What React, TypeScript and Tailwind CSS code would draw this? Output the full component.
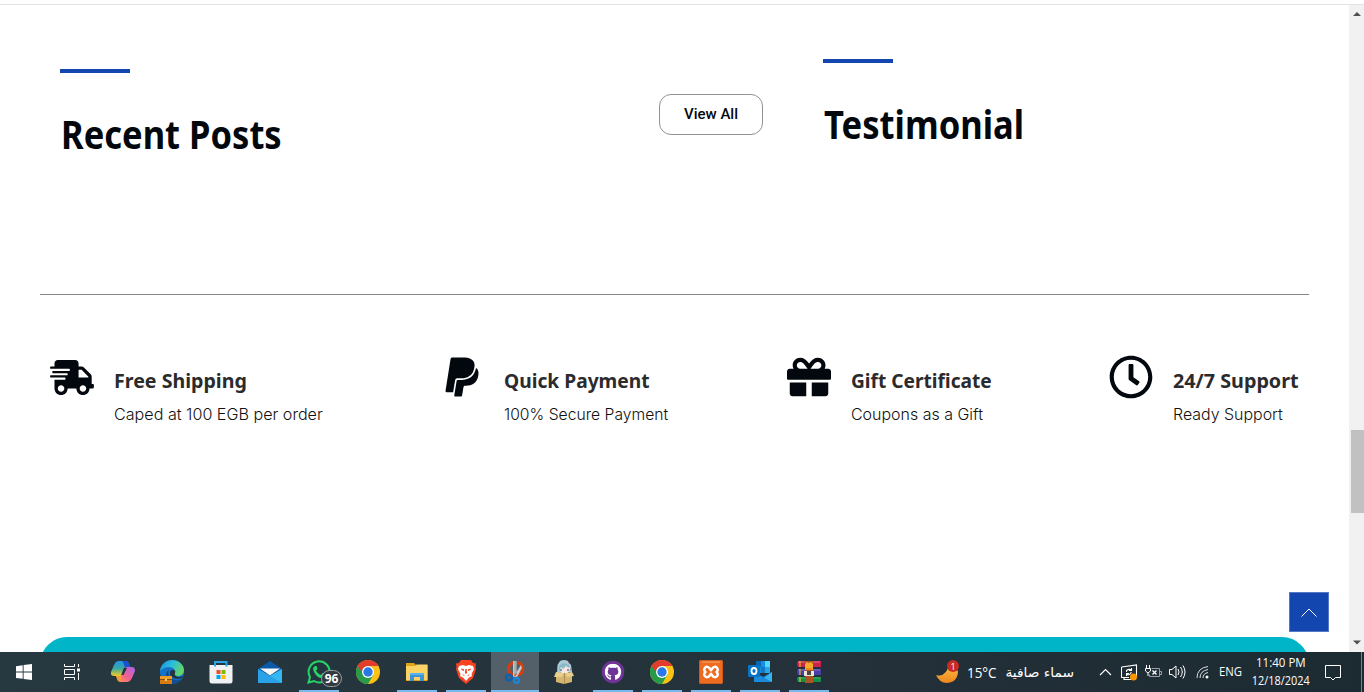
import React from 'react';
import { FaShippingFast, FaPaypal, FaGift, FaRegClock, FaGithub } from 'react-icons/fa';

type Feature = { title: string; text: string; icon: React.ReactNode; titleClass: string; textClass: string };

const features: Feature[] = [
  { title: 'Free Shipping', text: 'Caped at 100 EGB per order', icon: <FaShippingFast className="h-[35px] w-[44px]" />, titleClass: 'scale-x-[0.98]', textClass: 'scale-x-[1.04]' },
  { title: 'Quick Payment', text: '100% Secure Payment', icon: <FaPaypal className="h-[44px] w-[44px]" />, titleClass: 'scale-x-[0.96]', textClass: 'scale-x-[1.012]' },
  { title: 'Gift Certificate', text: 'Coupons as a Gift', icon: <FaGift className="h-[44px] w-[44px]" />, titleClass: 'scale-x-[0.957]', textClass: 'scale-x-[1.03]' },
  { title: '24/7 Support', text: 'Ready Support', icon: <FaRegClock className="h-[44px] w-[44px]" />, titleClass: 'scale-x-[0.987]', textClass: 'scale-x-[1.028]' },
];

function FeatureItem({ f }: { f: Feature }) {
  return (
    <div className="flex">
      <div className="flex h-[44px] w-[44px] shrink-0 items-center justify-center text-[#02080d]">{f.icon}</div>
      <div className="ml-[20px] whitespace-nowrap">
        <div className={`mt-[12px] h-[28px] w-max origin-left font-['Noto_Sans'] text-[20px] leading-[28px] font-bold text-[#2b2b2d] ${f.titleClass}`}>{f.title}</div>
        <div className={`mt-[8px] h-[24px] w-max origin-left font-['Inter'] text-[15.5px] leading-[24px] font-light text-[#111] ${f.textClass}`}>{f.text}</div>
      </div>
    </div>
  );
}

function Windows() {
  return (
    <svg width="16" height="16" viewBox="0 0 16 16" fill="#fff">
      <path d="M0 2.2 6.7 1.2V7.6H0zM7.6 1.1 16 0V7.6H7.6zM0 8.5H6.7V14.8L0 13.9zM7.6 8.5H16V16L7.6 14.9z" />
    </svg>
  );
}

function TaskView() {
  return (
    <svg width="16" height="16" viewBox="0 0 16 16" fill="none" stroke="#fff">
      <path d="M.5 0V2.5H10.5V0M.5 16V13.5H10.5V16M.5 5.5H10.5V10.5H.5zM14.5 0V3M14.5 9V16" />
      <path d="M13 4.5H16V7.5H13z" fill="#fff" stroke="none" />
    </svg>
  );
}

function Copilot() {
  return (
    <svg width="24" height="22" viewBox="0 0 24 22">
      <defs>
        <linearGradient id="cpA" x1="0" y1="0" x2="0" y2="1"><stop offset="0" stopColor="#2496e8" /><stop offset=".5" stopColor="#3aa9a0" /><stop offset="1" stopColor="#f5cd20" /></linearGradient>
        <linearGradient id="cpB" x1="1" y1="0" x2="0" y2="1"><stop offset="0" stopColor="#a565ee" /><stop offset=".55" stopColor="#f4608d" /><stop offset="1" stopColor="#ff9a4d" /></linearGradient>
      </defs>
      <path d="M5 1Q6 0 8 0H15Q17 0 18 3L19 6H15Q13 6 12 9L10 15H3Q-1 15 0 11L3 4Q4 2 5 1Z" fill="url(#cpA)" />
      <path d="M11 0H15Q17 0 18 3L19 6H15Q13 6 13 4Q12 0 11 0Z" fill="#1a52d4" />
      <path d="M15 6H21Q24 6 24 10L21 17Q19 21 16 21H9Q7 21 6 18L5 15H9Q11 15 12 12Z" fill="url(#cpB)" />
      <path d="M5 15H9Q11 15 12 12L10 18Q9 21 7 20Z" fill="#f39a31" />
      <path d="M13.500 7H16L12.500 14H10.500Z" fill="#26343d" />
    </svg>
  );
}

function Edge() {
  return (
    <svg width="24" height="24" viewBox="0 0 24 24">
      <defs>
        <linearGradient id="edA" x1="0" y1="0" x2="1" y2=".4"><stop offset="0" stopColor="#1a8fd8" /><stop offset=".5" stopColor="#29bce0" /><stop offset="1" stopColor="#62d46c" /></linearGradient>
      </defs>
      <circle cx="12" cy="12" r="12" fill="#1473c8" />
      <path d="M0 11C1 4 6 0 12 0C19 0 24 5 24 10C24 14 21 16 18 16C15 16 14 15 15 13C16 10 13 7 9 7C5 7 2 9 0 11Z" fill="url(#edA)" />
      <path d="M9 10C7 14 10 19 15 20C18 21 21 19 22 18L20 21Q17 24 12 24C7 23 5 18 6 14C7 11 8 10 9 10Z" fill="#124c91" />
      <path d="M15 13C14 15 16 17 19 17C21 17 23 16 23.500 15L22 18C17 20 10 18 10 13C10 11 12 9 14 10Q16 11 15 13Z" fill="#26343d" />
      <path d="M0 16H12V24H0Z" fill="#d87b13" /><path d="M0 16H12V19H0Z" fill="#f09c27" /><path d="M0 19.500H12" stroke="#8d4c0a" /><path d="M5 18.500H7V21H5Z" fill="#ffc95c" />
    </svg>
  );
}

function Store() {
  return (
    <svg width="24" height="24" viewBox="0 0 24 24">
      <path d="M.5 5H23.500V21Q23.500 23.500 21 23.500H3Q.5 23.500 .5 21Z" fill="#f0f1f3" />
      <path d="M6 6.500V2H17.500V6.500" fill="none" stroke="#2aa5e8" strokeWidth="2" />
      <path d="M7.500 10H11.500V14H7.500Z" fill="#f25022" /><path d="M12.500 10H16.500V14H12.500Z" fill="#7fba00" /><path d="M7.500 15H11.500V19H7.500Z" fill="#00a4ef" /><path d="M12.500 15H16.500V19H12.500Z" fill="#ffb900" />
    </svg>
  );
}

function Mail() {
  return (
    <svg width="24" height="24" viewBox="0 0 24 24">
      <path d="M0 9 12 1 24 9V12H0Z" fill="#0b5aa9" />
      <path d="M2 8.500H22L12 15.500Z" fill="#f5f7f9" />
      <path d="M0 9 12 15.500 24 9V23H0Z" fill="#1f8fe0" /><path d="M24 9 0 23H24Z" fill="#35b8f1" /><path d="M0 9 24 23H0Z" fill="#2aa2e8" />
    </svg>
  );
}

function WhatsApp() {
  return (
    <span className="relative block h-6 w-6">
      <svg width="24" height="24" viewBox="0 0 24 24">
        <path d="M1.500 22.500 3 17A10.500 10.500 0 1 1 7 21Z" fill="none" stroke="#25d366" strokeWidth="2" />
        <path d="M8 6C6 7 5.500 9 7 12C9 16 13 19 16 18L19 15 15.500 13 14 15C12 14.500 10 12.500 9 10.500L10.500 9 9.500 6Z" fill="#25d366" />
      </svg>
      <span className="absolute top-[10px] left-[14px] flex h-[17px] w-[21px] items-center justify-center rounded-full border border-[#98a0a3] bg-[#303a40] font-['Noto_Sans'] text-[12px] leading-none font-bold text-white">96</span>
    </span>
  );
}

function Chrome() {
  return (
    <svg width="24" height="24" viewBox="0 0 24 24">
      <circle cx="12" cy="12" r="12" fill="#fbc116" />
      <path d="M1.600 6A12 12 0 0 0 12 24L17.200 15 12 12Z" fill="#269b4a" />
      <path d="M12 6H22.400L17 15 12 12Z" fill="#fbc116" /><path d="M1.600 6 6.800 15 12 12V6Z" fill="#269b4a" /><path d="M1.600 6A12 12 0 0 1 22.400 6H12A6 6 0 0 0 6.300 10.500L5.400 11.500Z" fill="#e33b2e" />
      <circle cx="12" cy="12" r="6" fill="#fff" /><circle cx="12" cy="12" r="4.700" fill="#2878e8" />
    </svg>
  );
}

function Explorer() {
  return (
    <svg width="22" height="18" viewBox="0 0 22 18">
      <path d="M0 0H8L10 2H21.500V18H0Z" fill="#e2a21b" /><path d="M0 3H9L10.500 1.500H21.500V17H0Z" fill="#fbd365" />
      <path d="M4 18V10H18V18H14V14H8V18Z" fill="#3d92d8" /><path d="M4 10H18V12H4Z" fill="#57b1ec" />
    </svg>
  );
}

function Brave() {
  return (
    <svg width="22" height="24" viewBox="0 0 22 24">
      <path d="M6 0H16L18 3 21 3.500 20.500 7 21 9 18 18 11 24 4 18 1 9 1.500 7 1 3.500 4 3Z" fill="#fb4220" />
      <path d="M4 6 8 5 11 6 14 5 18 6 19 9 16.500 14 17 16 14 17.500 11 21 8 17.500 5 16 5.500 14 3 9Z" fill="#fff" />
      <path d="M6 8.500 9 9.200V11L6.500 10ZM16 8.500 13 9.200V11L15.500 10ZM10.300 9H11.700L12 13 11 14 10 13ZM7.500 14 10 16 8 15.500ZM14.500 14 12 16 14 15.500Z" fill="#fb4220" />
    </svg>
  );
}

function Snip() {
  return (
    <svg width="20" height="24" viewBox="0 0 20 24">
      <path d="M12 2.500C17 3 18.500 7 17.500 11C16 15 11 16 7 14.500C3 13 3 8 4.500 5.500Q6 3 9 2.500" fill="none" stroke="#d73d0c" strokeWidth="3" />
      <path d="M8 1 11.500 1V15L8 17ZM16 5 9 16 11.500 18 17 8Z" fill="#c5c7c8" /><path d="M10 1V15" stroke="#8f9497" />
      <circle cx="4" cy="17.500" r="2.900" fill="none" stroke="#0c62b3" strokeWidth="2.400" /><circle cx="11.500" cy="20.300" r="2.500" fill="none" stroke="#1687da" strokeWidth="2.300" />
    </svg>
  );
}

function BoxGirl() {
  return (
    <svg width="20" height="24" viewBox="0 0 20 24">
      <path d="M3 13 3.500 5 6 1Q10-1 14 1L17 5 18 12Z" fill="#a9cbd6" />
      <path d="M6 7 8 5H14L16 9 14 13H7Z" fill="#f6e6df" /><path d="M5 6Q9 1 15 5L15 8 12 6 9 9 7 7 5 12Z" fill="#8ab9c9" />
      <path d="M7 9V11M14 9V11" stroke="#477294" strokeWidth="1.300" /><path d="M14 2 16 4M16 9 17 10" stroke="#c45d59" />
      <path d="M2 13H18V22L10 24 2 22Z" fill="#d6b66f" /><path d="M0 17 2 12 10 13 8 17ZM20 16 18 12 11 13 13 17Z" fill="#e9cf8c" /><path d="M10.500 13V24" stroke="#ac8d52" />
    </svg>
  );
}

function Github() {
  return (
    <svg width="24" height="24" viewBox="0 0 24 24">
      <circle cx="12" cy="12" r="11.300" fill="#6f3596" />
      <g transform="translate(3.500 3.500)"><FaGithub size={17} color="#fff" /></g>
    </svg>
  );
}

function Xampp() {
  return (
    <svg width="24" height="24" viewBox="0 0 24 24">
      <rect width="24" height="24" rx="2" fill="#ed6c20" /><rect x=".500" y=".500" width="23" height="23" rx="2" fill="none" stroke="#cb5b1d" /><path d="M3 2H21" stroke="#f7a56e" />
      <path d="M12 10.300 10.300 8A2.800 2.800 0 1 0 6.500 12A2.800 2.800 0 1 0 10.300 16L12 13.700 13.700 16A2.800 2.800 0 1 0 17.500 12A2.800 2.800 0 1 0 13.700 8Z" fill="none" stroke="#fff" strokeWidth="2.500" strokeLinejoin="round" />
    </svg>
  );
}

function Outlook() {
  return (
    <svg width="24" height="24" viewBox="0 0 24 24">
      <path d="M8 1H22V13H8Z" fill="#1490df" /><path d="M8 1H13V7H8Z" fill="#0968b5" /><path d="M17 1H22V7H17Z" fill="#50d8ff" /><path d="M13 7H17V13H13Z" fill="#1479c5" /><path d="M17 7H22V13H17Z" fill="#28a8ea" />
      <path d="M6 12 15 17 24 12V22H6Z" fill="#1283d3" /><path d="M24 12 10 22H24Z" fill="#38b5ef" /><path d="M6 12 24 22H6Z" fill="#1a8bda" />
      <rect y="5" width="12" height="12" rx="1" fill="#0673c5" /><ellipse cx="6" cy="11" rx="2.500" ry="3" fill="none" stroke="#fff" strokeWidth="1.800" />
    </svg>
  );
}

function Winrar() {
  return (
    <svg width="24" height="24" viewBox="0 0 24 24">
      <path d="M1 1H24V7H1Q-1 4 1 1Z" fill="#c9224d" /><path d="M1 9H24V15H1Q-1 12 1 9Z" fill="#4a3da8" /><path d="M1 17H24V22H1Q-1 19 1 17Z" fill="#178c46" />
      <path d="M1 2H23" stroke="#e96c85" /><path d="M1 10H23" stroke="#8279d0" /><path d="M1 18H23" stroke="#39b970" />
      <path d="M3 1V7M3 9V15M3 17V22" stroke="#e0b928" strokeWidth="1.200" />
      <path d="M8 1H16V23H8Z" fill="#ad5522" /><path d="M8 4 10 2 12 3 14 2 16 4V10H8Z" fill="#f7a927" /><path d="M9 8H15V10H9Z" fill="#e88b20" /><path d="M7 11H17V16H7Z" fill="#e8e5df" /><path d="M10 11H14V15H10Z" fill="#58433c" />
    </svg>
  );
}

const apps = [
  { icon: <Copilot />, open: false }, { icon: <Edge />, open: false }, { icon: <Store />, open: false }, { icon: <Mail />, open: false },
  { icon: <WhatsApp />, open: true }, { icon: <Chrome />, open: false }, { icon: <Explorer />, open: true }, { icon: <Brave />, open: true },
  { icon: <Snip />, open: true, active: true }, { icon: <BoxGirl />, open: false }, { icon: <Github />, open: true }, { icon: <Chrome />, open: true },
  { icon: <Xampp />, open: true }, { icon: <Outlook />, open: true }, { icon: <Winrar />, open: true },
];

function Taskbar() {
  return (
    <footer className="flex h-[40px] bg-linear-to-r from-[#263840] via-[#24313a] via-60% to-[#1c2a32] font-['Open_Sans'] text-[12px] text-white">
      <div className="flex w-[48px] items-center justify-center"><Windows /></div>
      <div className="flex w-[51px] items-center pl-[16px]"><TaskView /></div>
      {apps.map((a, i) => (
        <div key={i} className="flex w-[49px] shrink-0">
          <div className={a.active ? 'flex h-[40px] w-[48px] flex-col items-center bg-[#536069]' : 'flex h-[40px] w-[48px] flex-col items-center'}>
            <div className="flex h-[38px] items-center pt-[2px]">{a.icon}</div>
            {a.open && <div className={a.active ? 'h-[2px] w-[48px] bg-[#76b9ed]' : 'h-[2px] w-[40px] bg-[#76b9ed]'} />}
          </div>
        </div>
      ))}
      <div className="ml-[102px] flex items-center">
        <svg width="24" height="24" viewBox="0 0 24 24">
          <defs><linearGradient id="moon" x2="0" y2="1"><stop stopColor="#ffc44b" /><stop offset="1" stopColor="#ed861d" /></linearGradient></defs>
          <path d="M0 15Q10 18 14 3Q21 6 22 12Q21 23 10 23Q3 22 0 15Z" fill="url(#moon)" />
          <circle cx="17" cy="6" r="6" fill="#c72b22" /><text x="17" y="9.500" textAnchor="middle" fontSize="9" fill="#fff" fontFamily="Open Sans">1</text>
        </svg>
        <span className="ml-[7px] w-[30px] origin-left scale-x-[0.96] text-[14px] whitespace-nowrap">15°C</span>
        <span dir="rtl" className="ml-[8px] w-[69px] origin-right scale-x-[1.06] pt-[2px] font-['DejaVu_Sans'] text-[13px] whitespace-nowrap">سماء صافية</span>
      </div>
      <div className="ml-[25px] flex items-center">
        <svg width="13" height="8" viewBox="0 0 13 8" fill="none" stroke="#fff" strokeWidth="1.200"><path d="M1 7 6.500 1.500 12 7" /></svg>
        <svg className="ml-[9px]" width="17" height="17" viewBox="0 0 17 17" fill="none" stroke="#fff" strokeWidth="1.100"><path d="M.5 3 15.500 1V13M.5 3V13.500H8M3 13.500V15.500H10M5.500 8V6.500Q8 4.500 10.500 6M10.500 4V6.500H8M10 8V9Q8 12 5.500 10M5.500 12V9.500H8" /><circle cx="12.500" cy="13" r="3.500" fill="#ff9800" stroke="none" /></svg>
        <svg className="ml-[7px]" width="17" height="14" viewBox="0 0 17 14" fill="none" stroke="#fff"><path d="M1.500 0V3M4.500 0V3M.5 3.500H5.500V6L3 8 .5 6ZM3 8V11" /><path d="M6.500 3.500H14.500V11.500H4.500V9.500M15 6.500H16.500V9.500H15" stroke="#99a2a6" /><path d="M7.500 5.500 11.500 9.500M11.500 5.500 7.500 9.500" strokeWidth="1.300" /></svg>
        <svg className="ml-[7px]" width="17" height="16" viewBox="0 0 17 16" fill="none" stroke="#fff"><path d="M.5 5.500H3L7 2V14L3 10.500H.5ZM9 5Q11 8 9 11M11.500 3Q15 8 11.500 13M14 1.500Q18 8 14 14.500" /></svg>
        <svg className="ml-[10px]" width="14" height="14" viewBox="0 0 14 14" fill="none" stroke="#d8dcde"><path d="M1 13Q1 3 12 1.500M4 13Q4 6 12 4.500M7 13Q7 8.500 12 7.500" /><circle cx="11" cy="12" r="1.500" fill="#fff" stroke="none" /></svg>
        <span className="ml-[9px] w-[24px] origin-left scale-x-[0.94] text-[12px] whitespace-nowrap">ENG</span>
      </div>
      <div className="ml-[7px] flex w-[61px] flex-col items-center pt-[2px] text-[12px] leading-[18px] whitespace-nowrap">
        <span className="origin-center scale-x-[0.96]">11:40 PM</span><span className="origin-center scale-x-[0.91]">12/18/2024</span>
      </div>
      <div className="ml-[13px] flex items-center"><svg width="18" height="17" viewBox="0 0 18 17" fill="none" stroke="#fff"><path d="M1.500 1.500H16.500V13.500H11.500L9 16 6.500 13.500H1.500Z" /></svg></div>
      <div className="ml-auto h-[40px] w-[3px] border-l border-[#75828a]" />
    </footer>
  );
}

export default function App() {
  return (
    <div className="relative flex h-[692px] w-[1364px] flex-col overflow-hidden bg-white">
      <div className="mt-[4px] h-px shrink-0 bg-[#e2e2e8]" />
      <div className="flex h-[647px] shrink-0">
        <main className="flex w-[1349px] flex-col">
          <div className="mx-[40px] flex h-[290px] w-[1269px] border-b border-[#858585]">
            <section className="w-[763px] pt-[64px] pl-[20px]">
              <div className="h-[4px] w-[70px] bg-[#1346af]" />
              <div className="flex">
                <h2 className="mt-[31px] w-[599px] pl-px font-['Noto_Sans'] text-[39px] leading-[60px] font-bold whitespace-nowrap text-[#02080d]"><span className="inline-block origin-left scale-x-[0.885]">Recent Posts</span></h2>
                <button className="mt-[21px] h-[41px] w-[104px] rounded-[12px] border border-[#929292] font-['Roboto'] text-[15px] font-medium text-[#02080d]">View All</button>
              </div>
            </section>
            <section className="pt-[54px] pl-[20px]">
              <div className="h-[4px] w-[70px] bg-[#1346af]" />
              <h2 className="mt-[31px] pl-px font-['Noto_Sans'] text-[39px] leading-[60px] font-bold whitespace-nowrap text-[#02080d]"><span className="inline-block origin-left scale-x-[0.887]">Testimonial</span></h2>
            </section>
          </div>
          <div className="mt-[60px] grid h-[282px] grid-cols-[390px_346.5px_322.5px_200px] pl-[50px]">
            {features.map((f) => <FeatureItem key={f.title} f={f} />)}
          </div>
          <div className="ml-[40px] h-[15px] w-[1269px] overflow-hidden"><div className="h-[100px] rounded-t-[27px] bg-[#00b5c8]" /></div>
        </main>
        <aside className="flex w-[15px] flex-col items-center bg-[#f1f1f1]">
          <svg className="mt-[6px] ml-px" width="8" height="6" viewBox="0 0 8 6"><path d="M0 5 4 1 8 5Z" fill="#505050" /></svg>
          <div className="mt-[413px] ml-[2px] h-[83px] w-[13px] bg-[#c1c1c1]" />
          <svg className="mt-[126px] ml-px" width="8" height="6" viewBox="0 0 8 6"><path d="M0 1.500H8L4 5.500Z" fill="#505050" /></svg>
        </aside>
      </div>
      <Taskbar />
      <button className="absolute top-[592px] left-[1289px] flex h-[40px] w-[40px] items-center justify-center border border-[#5278c6] bg-[#1346af]">
        <svg width="16" height="9" viewBox="0 0 16 9" fill="none" stroke="#fff"><path d="M.5 8.500 8 1 15.500 8.500" /></svg>
      </button>
    </div>
  );
}
